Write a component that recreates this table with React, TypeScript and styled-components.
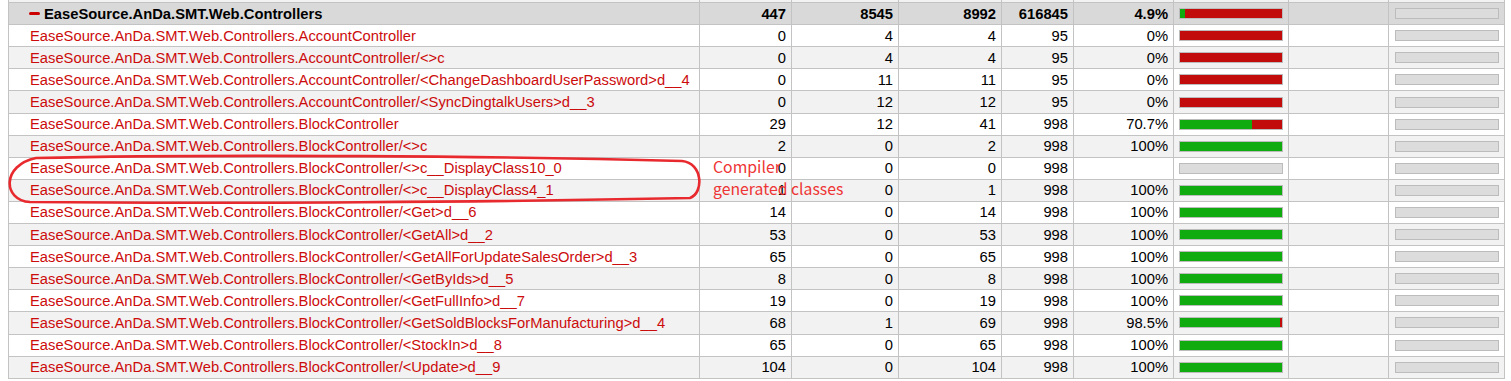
import React from "react";
import styled, { createGlobalStyle } from "styled-components";

const GlobalStyle = createGlobalStyle`
  html, body { margin: 0; padding: 0; background: #ffffff; }
  body { font-family: "Liberation Sans", Arial, sans-serif; }
`;

const Page = styled.div`
  position: relative;
  height: 381px;
  overflow: hidden;
  padding-left: 8px;
`;

const Table = styled.table`
  border-collapse: collapse;
  table-layout: fixed;
  width: 1496px;
  margin-top: -20px;
  font-size: 14.75px;
  color: #000;
`;

const Row = styled.tr<{ $kind: "head" | "odd" | "even" }>`
  height: 22.1px;
  background: ${(p) =>
    p.$kind === "head" ? "#d9d9d9" : p.$kind === "even" ? "#f2f2f2" : "#ffffff"};
  font-weight: ${(p) => (p.$kind === "head" ? 700 : 400)};
`;

const Cell = styled.td<{ $align?: "left" | "right" | "center" }>`
  border: 1px solid #c3c3c3;
  padding: 0 5px 0 5px;
  text-align: ${(p) => p.$align ?? "right"};
  vertical-align: middle;
  white-space: nowrap;
  overflow: hidden;
  line-height: 20px;
`;

const NameCell = styled(Cell)<{ $head?: boolean }>`
  padding-left: ${(p) => (p.$head ? "20px" : "21px")};
  color: ${(p) => (p.$head ? "#000" : "#cc0c0c")};
`;

const Collapse = styled.span`
  display: inline-block;
  width: 11px;
  height: 3px;
  border-radius: 1.5px;
  background: #cc0000;
  vertical-align: middle;
  margin-right: 4px;
  position: relative;
  top: -1px;
`;

const Bar = styled.div<{ $empty?: boolean }>`
  display: flex;
  height: 9px;
  border: 1px solid #bcbcbc;
  background: ${(p) => (p.$empty ? "#dcdcdc" : "#c20c0c")};
`;

const Fill = styled.div`
  height: 100%;
  background: #0fab0f;
`;

const BarCell = styled(Cell)`
  padding: 0 5px 0 5px;
`;

const GreyCell = styled(Cell)`
  padding: 0 5px 0 6px;
`;

const Annotation = styled.div`
  position: absolute;
  left: 713px;
  top: 156px;
  font-family: "Noto Sans CJK SC", "Noto Sans", sans-serif;
  font-size: 15.8px;
  line-height: 22px;
  color: #ee3434;
  pointer-events: none;
`;

const Ring = styled.svg`
  position: absolute;
  left: 0;
  top: 0;
  pointer-events: none;
`;

type Item = {
  name: string;
  a: number;
  b: number;
  c: number;
  d: number;
  pct: number | null;
};

const P = "EaseSource.AnDa.SMT.Web.Controllers.";
const items: Item[] = [
  { name: P + "AccountController", a: 0, b: 4, c: 4, d: 95, pct: 0 },
  { name: P + "AccountController/<>c", a: 0, b: 4, c: 4, d: 95, pct: 0 },
  { name: P + "AccountController/<ChangeDashboardUserPassword>d__4", a: 0, b: 11, c: 11, d: 95, pct: 0 },
  { name: P + "AccountController/<SyncDingtalkUsers>d__3", a: 0, b: 12, c: 12, d: 95, pct: 0 },
  { name: P + "BlockController", a: 29, b: 12, c: 41, d: 998, pct: 70.7 },
  { name: P + "BlockController/<>c", a: 2, b: 0, c: 2, d: 998, pct: 100 },
  { name: P + "BlockController/<>c__DisplayClass10_0", a: 0, b: 0, c: 0, d: 998, pct: null },
  { name: P + "BlockController/<>c__DisplayClass4_1", a: 1, b: 0, c: 1, d: 998, pct: 100 },
  { name: P + "BlockController/<Get>d__6", a: 14, b: 0, c: 14, d: 998, pct: 100 },
  { name: P + "BlockController/<GetAll>d__2", a: 53, b: 0, c: 53, d: 998, pct: 100 },
  { name: P + "BlockController/<GetAllForUpdateSalesOrder>d__3", a: 65, b: 0, c: 65, d: 998, pct: 100 },
  { name: P + "BlockController/<GetByIds>d__5", a: 8, b: 0, c: 8, d: 998, pct: 100 },
  { name: P + "BlockController/<GetFullInfo>d__7", a: 19, b: 0, c: 19, d: 998, pct: 100 },
  { name: P + "BlockController/<GetSoldBlocksForManufacturing>d__4", a: 68, b: 1, c: 69, d: 998, pct: 98.5 },
  { name: P + "BlockController/<StockIn>d__8", a: 65, b: 0, c: 65, d: 998, pct: 100 },
  { name: P + "BlockController/<Update>d__9", a: 104, b: 0, c: 104, d: 998, pct: 100 },
];

const widths = [691, 92, 107, 103, 72, 100, 115, 100, 116];

function CoverageBar({ pct }: { pct: number | null }) {
  if (pct === null) return <Bar $empty />;
  return (
    <Bar>
      <Fill style={{ width: `${pct}%` }} />
    </Bar>
  );
}

export default function App() {
  return (
    <>
      <GlobalStyle />
      <Page>
        <Table>
          <colgroup>
            {widths.map((w, i) => (
              <col key={i} style={{ width: w }} />
            ))}
          </colgroup>
          <tbody>
            <Row $kind="even">
              <NameCell />
              <Cell />
              <Cell />
              <Cell />
              <Cell />
              <Cell />
              <Cell />
              <Cell />
              <Cell />
            </Row>
            <Row $kind="head">
              <NameCell $head $align="left">
                <Collapse />
                EaseSource.AnDa.SMT.Web.Controllers
              </NameCell>
              <Cell>447</Cell>
              <Cell>8545</Cell>
              <Cell>8992</Cell>
              <Cell>616845</Cell>
              <Cell>4.9%</Cell>
              <BarCell>
                <CoverageBar pct={4.9} />
              </BarCell>
              <Cell />
              <GreyCell>
                <Bar $empty />
              </GreyCell>
            </Row>
            {items.map((it, i) => (
              <Row key={it.name} $kind={i % 2 === 0 ? "odd" : "even"}>
                <NameCell $align="left">{it.name}</NameCell>
                <Cell>{it.a}</Cell>
                <Cell>{it.b}</Cell>
                <Cell>{it.c}</Cell>
                <Cell>{it.d}</Cell>
                <Cell>{it.pct === null ? "" : `${it.pct}%`}</Cell>
                <BarCell>
                  <CoverageBar pct={it.pct} />
                </BarCell>
                <Cell />
                <GreyCell>
                  <Bar $empty />
                </GreyCell>
              </Row>
            ))}
          </tbody>
        </Table>
        <Ring width="720" height="220">
          <path
            d="M 36 158 C 220 154, 500 156, 682 161 C 703 163, 704 193, 690 198 C 500 202, 220 204, 30 202 C 2 200, 2 165, 36 158 Z"
            fill="none"
            stroke="#e82a2f"
            strokeWidth="2.6"
          />
        </Ring>
        <Annotation>
          Compiler
          <br />
          generated classes
        </Annotation>
      </Page>
    </>
  );
}
